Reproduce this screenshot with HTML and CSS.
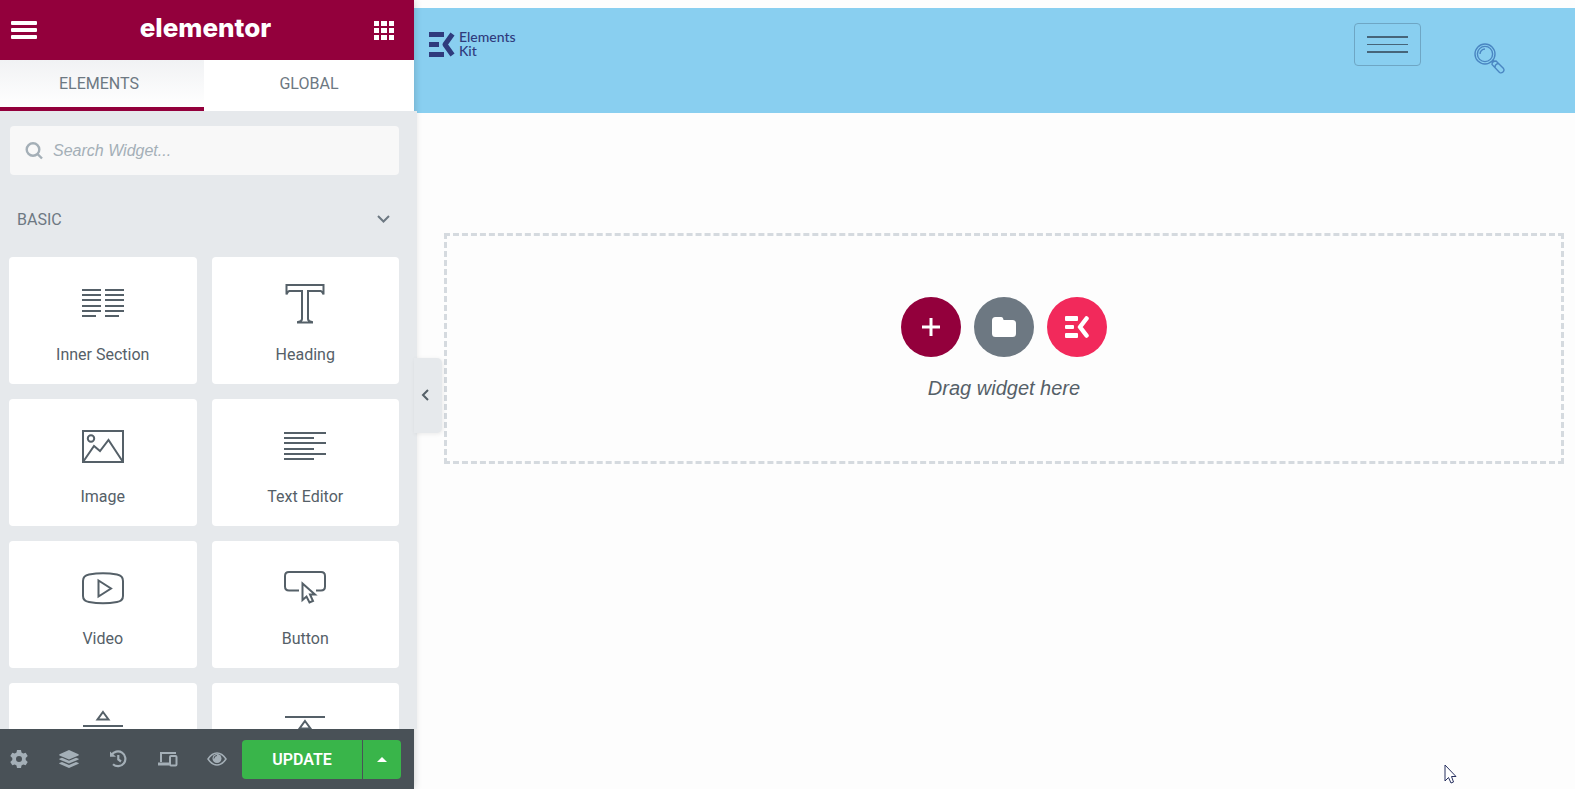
FILE: index.html
```
<!DOCTYPE html>
<html lang="en">
<head>
<meta charset="utf-8">
<title>Elementor</title>
<link rel="stylesheet" href="styles.css">
</head>
<body>
<div class="editor">

<aside class="panel">
  <header class="panel-header">
    <button class="icon-btn" aria-label="Menu">
      <svg width="26" height="18" viewBox="0 0 26 18" fill="#fff"><rect width="26" height="4" rx="1"/><rect y="7" width="26" height="4" rx="1"/><rect y="14" width="26" height="4" rx="1"/></svg>
    </button>
    <span class="brand">elementor</span>
    <button class="icon-btn" aria-label="Widgets panel">
      <svg width="20" height="19" viewBox="0 0 20 19" fill="#fff"><path d="M0 0h5v5H0zM7 0h6v5H7zM15 0h5v5h-5zM0 7h5v5H0zM7 7h6v5H7zM15 7h5v5h-5zM0 14h5v5H0zM7 14h6v5H7zM15 14h5v5h-5z"/></svg>
    </button>
  </header>

  <nav class="tabs">
    <button class="tab active">ELEMENTS</button>
    <button class="tab">GLOBAL</button>
  </nav>

  <div class="panel-content">
    <label class="search">
      <svg width="18" height="18" viewBox="0 0 18 18" fill="none" stroke="#a4afb7" stroke-width="2.400"><circle cx="8" cy="7.500" r="6.300"/><path d="M12.500 12L17 16.500"/></svg>
      <input type="search" placeholder="Search Widget..." aria-label="Search Widget">
    </label>

    <button class="category">
      BASIC
      <svg width="13" height="8" viewBox="0 0 13 8" fill="none" stroke="#6d7882" stroke-width="2"><path d="M1 1l5.500 5.500L12 1"/></svg>
    </button>

    <div class="widgets">
      <button class="widget">
        <svg viewBox="0 0 42 42"><path d="M0 7h19M23 7h19M0 12h19M23 12h19M0 17h19M23 17h19M0 23h19M23 23h19M0 28h19M23 28h19M0 33h14M23 33h14"/></svg>
        Inner Section
      </button>
      <button class="widget">
        <svg viewBox="0 0 42 42"><path d="M2.500 2h37v9.500c-.8-2-1.500-3.500-3-3.500H24v28c0 1.500 1 2.500 4 3v.5H14V39c3-.5 4-1.500 4-3V8H5.500c-1.500 0-2.200 1.500-3 3.500z"/></svg>
        Heading
      </button>
      <button class="widget">
        <svg viewBox="0 0 42 42"><path d="M1 6h40v31H1zM1 37l11-16 6 5 8.500-11L41 37"/><circle cx="9" cy="13.500" r="3.200"/></svg>
        Image
      </button>
      <button class="widget">
        <svg viewBox="0 0 42 42"><path d="M0 8h42M0 13h30M0 18h42M0 24h30M0 29h42M0 34h30"/></svg>
        Text Editor
      </button>
      <button class="widget">
        <svg viewBox="0 0 42 42"><path d="M7 7.500Q21 5 35 7.500Q41 8.500 41 14V29Q41 34 35 35Q21 37.500 7 35Q1 34 1 29V14Q1 8.500 7 7.500zM16.500 13.500v16L29 21.500z"/></svg>
        Video
      </button>
      <button class="widget">
        <svg viewBox="0 0 42 42"><path d="M15 23.500H5q-4 0-4-4V9q0-4 4-4h32q4 0 4 4v10.500q0 4-4 4h-5M18.500 16.500v16.500l4-3.500 3 6 3.500-1.500-3-6.500h5z"/></svg>
        Button
      </button>
      <button class="widget" aria-label="Divider">
        <svg viewBox="0 0 42 42"><path d="M1 17h40M21 3L26.500 10.500h-11z"/></svg>
      </button>
      <button class="widget" aria-label="Spacer">
        <svg viewBox="0 0 42 42"><path d="M1 8h40M21 12L26.500 19.500h-11zM1 36h40M21 19v8"/></svg>
      </button>
    </div>
  </div>

  <footer class="panel-footer">
    <button class="tool" aria-label="Settings">
      <svg width="18" height="18" viewBox="0 0 18 18"><path fill-rule="evenodd" d="M7 0h4l.5 2.600 1.700 1 2.500-.9 2 3.400-2 1.800v2.200l2 1.800-2 3.400-2.500-.9-1.700 1L11 18H7l-.5-2.600-1.700-1-2.500.9-2-3.400 2-1.800V7.900l-2-1.800 2-3.400 2.500.9 1.700-1zM9 6a3 3 0 1 0 0 6 3 3 0 0 0 0-6z"/></svg>
    </button>
    <button class="tool" aria-label="Navigator">
      <svg width="20" height="18" viewBox="0 0 20 18"><path d="M10 0l9.500 4.300Q20 5 19.500 5.400L10 9.400.5 5.400Q0 5 .5 4.300zM.3 8.700L3 7.800l7 3 7-3 2.700.9v.7L10 13.600.3 9.400zM.3 13L3 12.100l7 3 7-3 2.700.9v.7L10 18 .3 13.700z"/></svg>
    </button>
    <button class="tool" aria-label="History">
      <svg width="18" height="18" viewBox="0 0 18 18"><g fill="none" stroke="#a4afb7" stroke-width="2.200"><path d="M2.500 5.200A7.400 7.400 0 1 1 4 14.300"/><path d="M9.300 5v4.500l2.700 2"/></g><path d="M1 1.500l6 5.300H1z"/></svg>
    </button>
    <button class="tool" aria-label="Responsive mode">
      <svg width="20" height="16" viewBox="0 0 20 16" fill="none" stroke="#a4afb7" stroke-width="2"><path d="M3 11V2h15"/><path d="M0 13h11" stroke-width="3"/><rect x="12" y="5" width="6.500" height="9.500" rx="1"/></svg>
    </button>
    <button class="tool" aria-label="Preview changes">
      <svg width="20" height="14" viewBox="0 0 20 14"><path d="M1 7q4-6 9-6t9 6q-4 6-9 6T1 7z" fill="none" stroke="#a4afb7" stroke-width="1.500"/><circle cx="10" cy="6.500" r="4.500"/><path d="M10 3.500a3 3 0 0 0-3 3" fill="none" stroke="#495157"/></svg>
    </button>
    <div class="publish">
      <button class="update">UPDATE</button>
      <button class="options" aria-label="Save options">
        <svg width="10" height="5" viewBox="0 0 10 5" fill="#fff"><path d="M0 5l5-5 5 5z"/></svg>
      </button>
    </div>
  </footer>

  <button class="collapse" aria-label="Hide panel">
    <svg width="8" height="12" viewBox="0 0 8 12" fill="none" stroke="#556068" stroke-width="2"><path d="M7 1L2 6l5 5"/></svg>
  </button>
</aside>

<main class="preview">
  <header class="site-header">
    <a class="logo" href="#">
      <svg width="26" height="25" viewBox="0 0 26 25" fill="#2f3b7d"><path d="M0 0h15v5H0zM0 10h10v5H0zM0 20h15v5H0z"/><path d="M23.500 2l-7.500 10.500L23.500 23" fill="none" stroke="#2f3b7d" stroke-width="5" stroke-linejoin="round"/></svg>
      <span>Elements<br>Kit</span>
    </a>
    <div class="site-tools">
      <button class="nav-toggle" aria-label="Open menu"><i></i><i></i><i></i></button>
      <a class="site-search" href="#" aria-label="Search">
        <svg width="31" height="31" viewBox="0 0 31 31" fill="none" stroke="#4a86c2" stroke-width="1.400"><circle cx="11" cy="11" r="10"/><circle cx="11" cy="11" r="7.600"/><path d="M6 11A5 5 0 0 1 11 6M17.500 19.500l2.500-2.500M18 21.500q0-3.500 4-3.500l7.500 7.500q1.200 2-.5 3.500t-3.500.5zM21 24.500q0-3.500 3.500-4"/></svg>
      </a>
    </div>
  </header>

  <section class="drop-area">
    <div class="add-buttons">
      <button class="add section" aria-label="Add new section">
        <svg width="20" height="20" viewBox="0 0 20 20" stroke="#fff" stroke-width="3"><path d="M10 1v18M1 10h18"/></svg>
      </button>
      <button class="add template" aria-label="Add template">
        <svg width="24" height="20" viewBox="0 0 24 20" fill="#fff"><path d="M3.500 0H9q1.500 0 2 1.300l.6 1.700H20.500Q24 3 24 6.500v10q0 3.500-3.500 3.500h-17Q0 20 0 16.500v-13Q0 0 3.500 0z"/></svg>
      </button>
      <button class="add kit" aria-label="ElementsKit library">
        <svg width="24" height="22" viewBox="0 0 24 22" fill="#fff"><rect width="13" height="5" rx="1"/><rect y="9" width="9" height="4" rx="1"/><rect y="17" width="13" height="5" rx="1"/><path d="M21.500 2.500L15 11l6.500 8.500" fill="none" stroke="#fff" stroke-width="4.500" stroke-linecap="round" stroke-linejoin="round"/></svg>
      </button>
    </div>
    <p>Drag widget here</p>
  </section>
</main>

<svg class="cursor" width="13" height="20" viewBox="0 0 13 20" fill="#fff" stroke="#27305f"><path d="M1 1v16l3.500-3.500L7 19l2.500-1L7.500 12.500H12z"/></svg>
</div>
</body>
</html>
```
FILE: styles.css
```
* { box-sizing: border-box; }
body { margin: 0; background: #fdfdfd; font-family: Roboto, sans-serif; font-size: 16px; color: #556068; }
button { border: 0; padding: 0; margin: 0; background: none; font: inherit; color: inherit; cursor: pointer; }
svg { display: block; flex: none; }

.editor { display: flex; height: 100vh; overflow: hidden; position: relative; }

/* left panel */
.panel { position: relative; z-index: 1; flex: none; width: 414px; display: flex; flex-direction: column; box-shadow: 0 0 8px rgba(0, 0, 0, .2); }
.panel-header { display: flex; align-items: center; justify-content: space-between; height: 60px; padding: 0 20px 0 11px; background: #93003c; }
.brand { font: 800 26px/32px Inter, sans-serif; color: #fff; padding-bottom: 4px; }

.tabs { display: flex; background: #fff; height: 51px; }
.tab { flex: 1; color: #6d7882; padding: 0 0 1px; border-bottom: 4px solid transparent; }
.tab.active { background: linear-gradient(#f1f2f4, #fff); border-color: #93003c; flex: none; width: 204px; padding-right: 6px; }

.panel-content { flex: 1; min-height: 0; overflow: hidden; background: #e6e9ec; padding: 15px 15px 0 9px; box-shadow: 3px 0 0 #e6e9ec; }
.search { display: flex; align-items: center; gap: 10px; height: 49px; padding: 0 15px; margin-left: 1px; background: #f8f8f8; border-radius: 4px; }
.search input { flex: 1; min-width: 0; border: 0; outline: 0; padding: 0; background: none; font: italic 16px "Liberation Sans", sans-serif; color: #556068; }
.search input::placeholder { color: #a4afb7; opacity: 1; }
.category { display: flex; align-items: center; justify-content: space-between; width: 100%; height: 82px; padding: 6px 9px 0 8px; color: #6d7882; }

.widgets { display: grid; grid-template-columns: 1fr 1fr; gap: 15px; }
.widget { display: flex; flex-direction: column; align-items: center; gap: 20px; height: 127px; padding-top: 26px; background: #fff; border-radius: 4px; line-height: 20px; }
.widget svg { width: 42px; height: 42px; fill: none; stroke: #556068; stroke-width: 2; }

.panel-footer { display: flex; align-items: center; height: 60px; padding-right: 13px; background: #495157; }
.tool { flex: 1; display: flex; justify-content: center; align-items: center; height: 60px; fill: #a4afb7; }
.tool:first-child { flex: none; width: 44px; padding-right: 6px; }
.publish { display: flex; gap: 1px; }
.publish button { height: 39px; background: #39b54a; color: #fff; }
.update { width: 120px; border-radius: 4px 0 0 4px; font-weight: 600; }
.options { display: flex; align-items: center; justify-content: center; width: 38px; border-radius: 0 4px 4px 0; }

.collapse { position: absolute; left: 100%; top: 358px; width: 28px; height: 75px; padding: 0 0 2px 7px; background: #e6e9ec; border-radius: 0 5px 5px 0; box-shadow: 1px 1px 4px rgba(0, 0, 0, .08); }

/* page preview */
.preview { flex: 1; min-width: 0; padding-top: 8px; }
.site-header { display: flex; justify-content: space-between; height: 105px; padding: 15px 70px 0 15px; background: #89cff0; }
.logo { display: flex; gap: 4px; margin-top: 9px; color: #2f3b7d; text-decoration: none; font: 500 14px/14px Lato, sans-serif; }
.logo span { margin-top: -2px; }
.site-tools { display: flex; align-items: flex-start; gap: 53px; }
.nav-toggle { display: flex; flex-direction: column; justify-content: center; gap: 6px; width: 67px; height: 43px; padding: 0 12px; border: 1px solid #6ea6c4; border-radius: 4px; }
.nav-toggle i { height: 2px; background: #466579; }
.nav-toggle i:nth-child(2) { height: 1px; }
.site-search { margin-top: 20px; }

.drop-area { display: flex; flex-direction: column; align-items: center; margin: 120px 11px 0 30px; height: 231px; padding-top: 61px; border: 3px dashed #d5dadf; }
.add-buttons { display: flex; gap: 13px; }
.add { display: flex; align-items: center; justify-content: center; width: 60px; height: 60px; border-radius: 50%; }
.add.section { background: #93003c; }
.add.template { background: #6d7882; }
.add.kit { background: #f2295b; }
.drop-area p { margin: 19px 0 0; font: italic 20px/24px "Liberation Sans", sans-serif; }

.cursor { position: absolute; left: 1444px; top: 764px; }
```
